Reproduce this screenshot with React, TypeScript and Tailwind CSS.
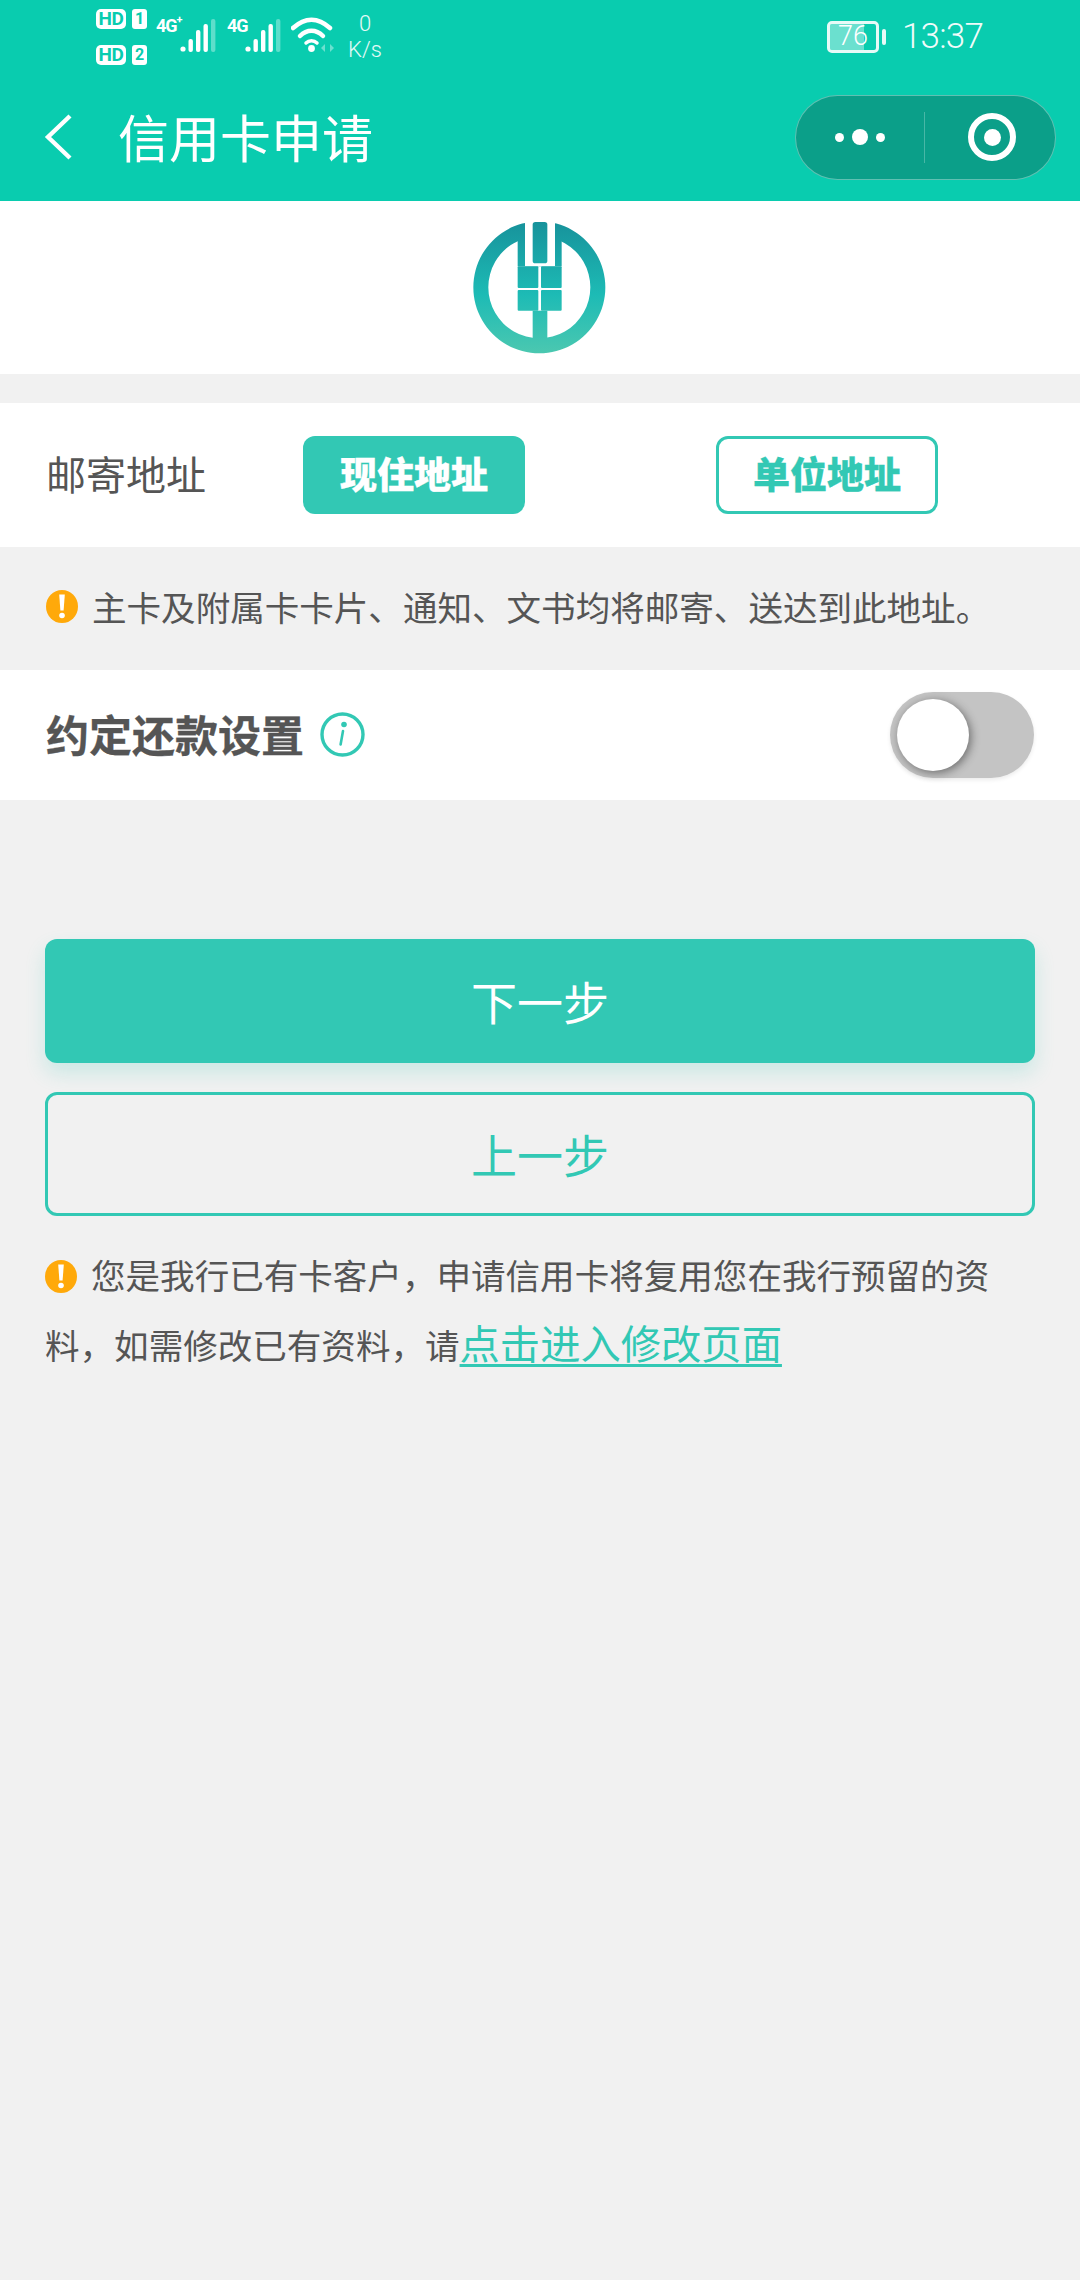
import React from "react";

function Warn() {
  return (
    <svg width="32" height="33" viewBox="0 0 32 33" className="inline-block align-[-4px] mr-[14px]">
      <ellipse cx="16" cy="16.5" rx="16" ry="16.5" fill="#FFA90A" />
      <path d="M13.2 4.5h5.6l-1.2 16h-3.2z" fill="#fff" />
      <circle cx="16" cy="25.5" r="2.8" fill="#fff" />
    </svg>
  );
}

function Logo() {
  return (
    <svg width="140" height="140" viewBox="90 50 420 420">
      <defs>
        <linearGradient id="lg" gradientUnits="userSpaceOnUse" x1="0" y1="60" x2="0" y2="460">
          <stop offset="0" stopColor="#17929B" />
          <stop offset="0.55" stopColor="#1DBBB5" />
          <stop offset="1" stopColor="#4CC8B0" />
        </linearGradient>
        <mask id="m">
          <rect x="90" y="50" width="420" height="420" fill="#fff" />
          <rect x="255" y="50" width="90" height="145" fill="#000" />
        </mask>
      </defs>
      <g fill="url(#lg)">
        <g mask="url(#m)">
          <path
            fillRule="evenodd"
            d="M298 60a198 198 0 1 0 .01 0zM298 105a153 153 0 1 1 -.01 0z"
          />
          <rect x="233" y="105" width="132" height="90" />
        </g>
        <rect x="278" y="62" width="44" height="124" rx="8" />
        <rect x="233" y="195" width="62" height="65" rx="3" />
        <rect x="303" y="195" width="62" height="65" rx="3" />
        <rect x="233" y="266" width="62" height="62" rx="3" />
        <rect x="303" y="266" width="62" height="62" rx="3" />
        <rect x="278" y="328" width="44" height="100" />
      </g>
    </svg>
  );
}

function Signal() {
  return (
    <svg width="38" height="36" viewBox="0 0 38 36">
      <circle cx="3" cy="31" r="2.6" fill="#fff" />
      <rect x="8.5" y="21" width="4.4" height="13" rx="2" fill="#fff" />
      <rect x="16" y="12" width="4.4" height="22" rx="2" fill="#fff" />
      <rect x="23.5" y="6" width="4.4" height="28" rx="2" fill="#fff" />
      <rect x="31" y="1" width="4.4" height="33" rx="2" fill="#fff" fillOpacity="0.35" />
    </svg>
  );
}

function HD({ n }: { n: string }) {
  return (
    <div className="flex items-center gap-[6px] h-[20px]">
      <span className="w-[30px] h-[20px] rounded-[5px] bg-white text-[#08CCAF] text-[19px] font-bold leading-[20px] tracking-[-0.5px] text-center font-['Roboto',sans-serif]">
        HD
      </span>
      <span className="w-[15px] h-[20px] rounded-[3px] bg-white text-[#08CCAF] text-[16px] font-bold leading-[20px] text-center font-['Roboto',sans-serif]">
        {n}
      </span>
    </div>
  );
}

export default function App() {
  return (
    <div className="w-[1080px] min-h-[2280px] bg-[#f1f1f1] font-['Noto_Sans_CJK_SC',sans-serif] text-[#555]">
      <header className="h-[201px] bg-[#09CCAF] text-white flex flex-col">
        <div className="h-[74px] flex pl-[96px] pr-[97px] items-start justify-between font-['Roboto',sans-serif]">
          <div className="flex items-start">
            <div className="flex flex-col gap-[16px] pt-[9px]">
              <HD n="1" />
              <HD n="2" />
            </div>
            <span className="ml-[9px] mt-[16px] text-[18px] font-bold leading-[20px] tracking-[-1px] w-[24px]">
              4G<sup className="text-[11px] align-[4px]">+</sup>
            </span>
            <div className="mt-[18px]">
              <Signal />
            </div>
            <span className="ml-[9px] mt-[16px] text-[18px] font-bold leading-[20px] tracking-[-1px] w-[18px]">
              4G
            </span>
            <div className="mt-[18px]">
              <Signal />
            </div>
            <svg width="50" height="36" viewBox="0 0 50 36" className="ml-[8px] mt-[17px]">
              <path d="M2 11C14 0 27 0 39 11" fill="none" stroke="#fff" strokeWidth="4.5" strokeLinecap="round" />
              <path d="M9 19C16 12 25 12 32 19" fill="none" stroke="#fff" strokeWidth="4.5" strokeLinecap="round" />
              <path d="M15 26C18 23 23 23 26 26" fill="none" stroke="#fff" strokeWidth="3.5" strokeLinecap="round" />
              <circle cx="20.5" cy="31.5" r="3.4" fill="#fff" />
              <path d="M34 27l-4 4 4 4zM39 27l4 4-4 4z" fill="#fff" fillOpacity="0.4" />
            </svg>
            <div className="ml-[6px] mt-[11px] w-[36px] text-center text-[22px] leading-[26px] font-light text-white/90">
              <div>0</div>
              <div>K/s</div>
            </div>
          </div>
          <div className="flex items-center mt-[20px] h-[33px]">
            <div className="relative w-[52px] h-[32px] rounded-[5px] border-[3px] border-white/90 overflow-hidden">
              <div className="absolute left-0 top-0 bottom-0 w-[34px] bg-white/40" />
              <span className="absolute inset-0 flex items-center justify-center text-[27px] leading-none font-light">
                76
              </span>
            </div>
            <div className="w-[4px] h-[16px] rounded-[2px] bg-white/90 ml-[3px]" />
            <span className="ml-[16px] text-[35px] tracking-[-0.8px] font-light leading-none text-white/95">13:37</span>
          </div>
        </div>
        <div className="flex-1 flex items-center justify-between pl-[43px] pr-[24px] pb-[1px]">
          <div className="flex items-center">
            <svg width="30" height="48" viewBox="0 0 30 48" fill="none" stroke="#fff" strokeWidth="4.4" className="-mt-[1px]">
              <path d="M27 3L5 24l22 21" />
            </svg>
            <h1 className="ml-[45px] mb-[3px] text-[51px] leading-[60px] font-normal">信用卡申请</h1>
          </div>
          <div className="w-[261px] h-[85px] rounded-full bg-[#0B9F89] border border-white/35 flex items-center">
            <div className="w-[128px] flex items-center justify-center gap-[8px]">
              <span className="w-[9px] h-[9px] rounded-full bg-white" />
              <span className="w-[16px] h-[16px] rounded-full bg-white" />
              <span className="w-[9px] h-[9px] rounded-full bg-white" />
            </div>
            <div className="w-px h-[51px] bg-white/25" />
            <div className="flex-1 flex items-center justify-center pl-[4px]">
              <div className="w-[48px] h-[48px] rounded-full border-[6px] border-white flex items-center justify-center">
                <span className="w-[17px] h-[17px] rounded-full bg-white" />
              </div>
            </div>
          </div>
        </div>
      </header>

      <section className="h-[173px] bg-white flex items-center justify-center">
        <Logo />
      </section>

      <section className="mt-[29px] h-[144px] bg-white flex items-center pl-[46px]">
        <span className="w-[257px] text-[40px] leading-none pb-[4px]">邮寄地址</span>
        <div className="w-[222px] h-[78px] rounded-[12px] bg-[#32C8B4] text-white text-[37px] font-black [-webkit-text-stroke:0.3px_#fff] leading-none pb-[3px] flex items-center justify-center">
          现住地址
        </div>
        <div className="ml-[191px] w-[222px] h-[78px] rounded-[12px] border-[3px] border-[#32C8B4] text-[#32C8B4] text-[37px] font-black [-webkit-text-stroke:0.3px_#32C8B4] leading-none pb-[3px] flex items-center justify-center">
          单位地址
        </div>
      </section>

      <p className="h-[123px] pl-[46px] pb-[5px] flex items-center text-[34.56px] leading-none whitespace-nowrap">
        <Warn />
        主卡及附属卡卡片、通知、文书均将邮寄、送达到此地址。
      </p>

      <section className="h-[130px] bg-white flex items-center pl-[46px] pr-[46px]">
        <span className="text-[43px] font-bold [-webkit-text-stroke:0.3px_#555] leading-none pb-[4px]">约定还款设置</span>
        <svg width="45" height="45" viewBox="0 0 45 45" className="ml-[16px] -mt-[1px]">
          <circle cx="22.5" cy="22.5" r="20.5" fill="none" stroke="#32C8B4" strokeWidth="3.4" />
          <circle cx="24" cy="12.5" r="2.8" fill="#32C8B4" />
          <path d="M23 19l-2.4 13.5" stroke="#32C8B4" strokeWidth="2.6" strokeLinecap="round" />
        </svg>
        <div className="ml-auto w-[144px] h-[86px] rounded-full bg-[#c4c4c4] flex items-center pl-[7px] shadow-[0_2px_4px_rgba(0,0,0,0.08)]">
          <span className="w-[72px] h-[72px] rounded-full bg-white shadow-[2px_2px_10px_rgba(0,0,0,0.45)]" />
        </div>
      </section>

      <main className="px-[45px] pt-[139px]">
        <button className="w-full h-[124px] rounded-[12px] bg-[#32C8B4] text-white text-[46px] leading-none pb-[2px] shadow-[0_10px_20px_rgba(50,200,180,0.2)]">
          下一步
        </button>
        <button className="mt-[29px] w-full h-[124px] rounded-[12px] border-[3px] border-[#32C8B4] text-[#32C8B4] text-[46px] leading-none pb-[2px]">
          上一步
        </button>
        <p className="mt-[24px] w-[965px] text-[34.56px] leading-[68px]">
          <Warn />
          您是我行已有卡客户，申请信用卡将复用您在我行预留的资料，如需修改已有资料，请
          <a className="text-[40.3px] text-[#32C8B4] underline decoration-[3px] underline-offset-[5px]">点击进入修改页面</a>
        </p>
      </main>
    </div>
  );
}
